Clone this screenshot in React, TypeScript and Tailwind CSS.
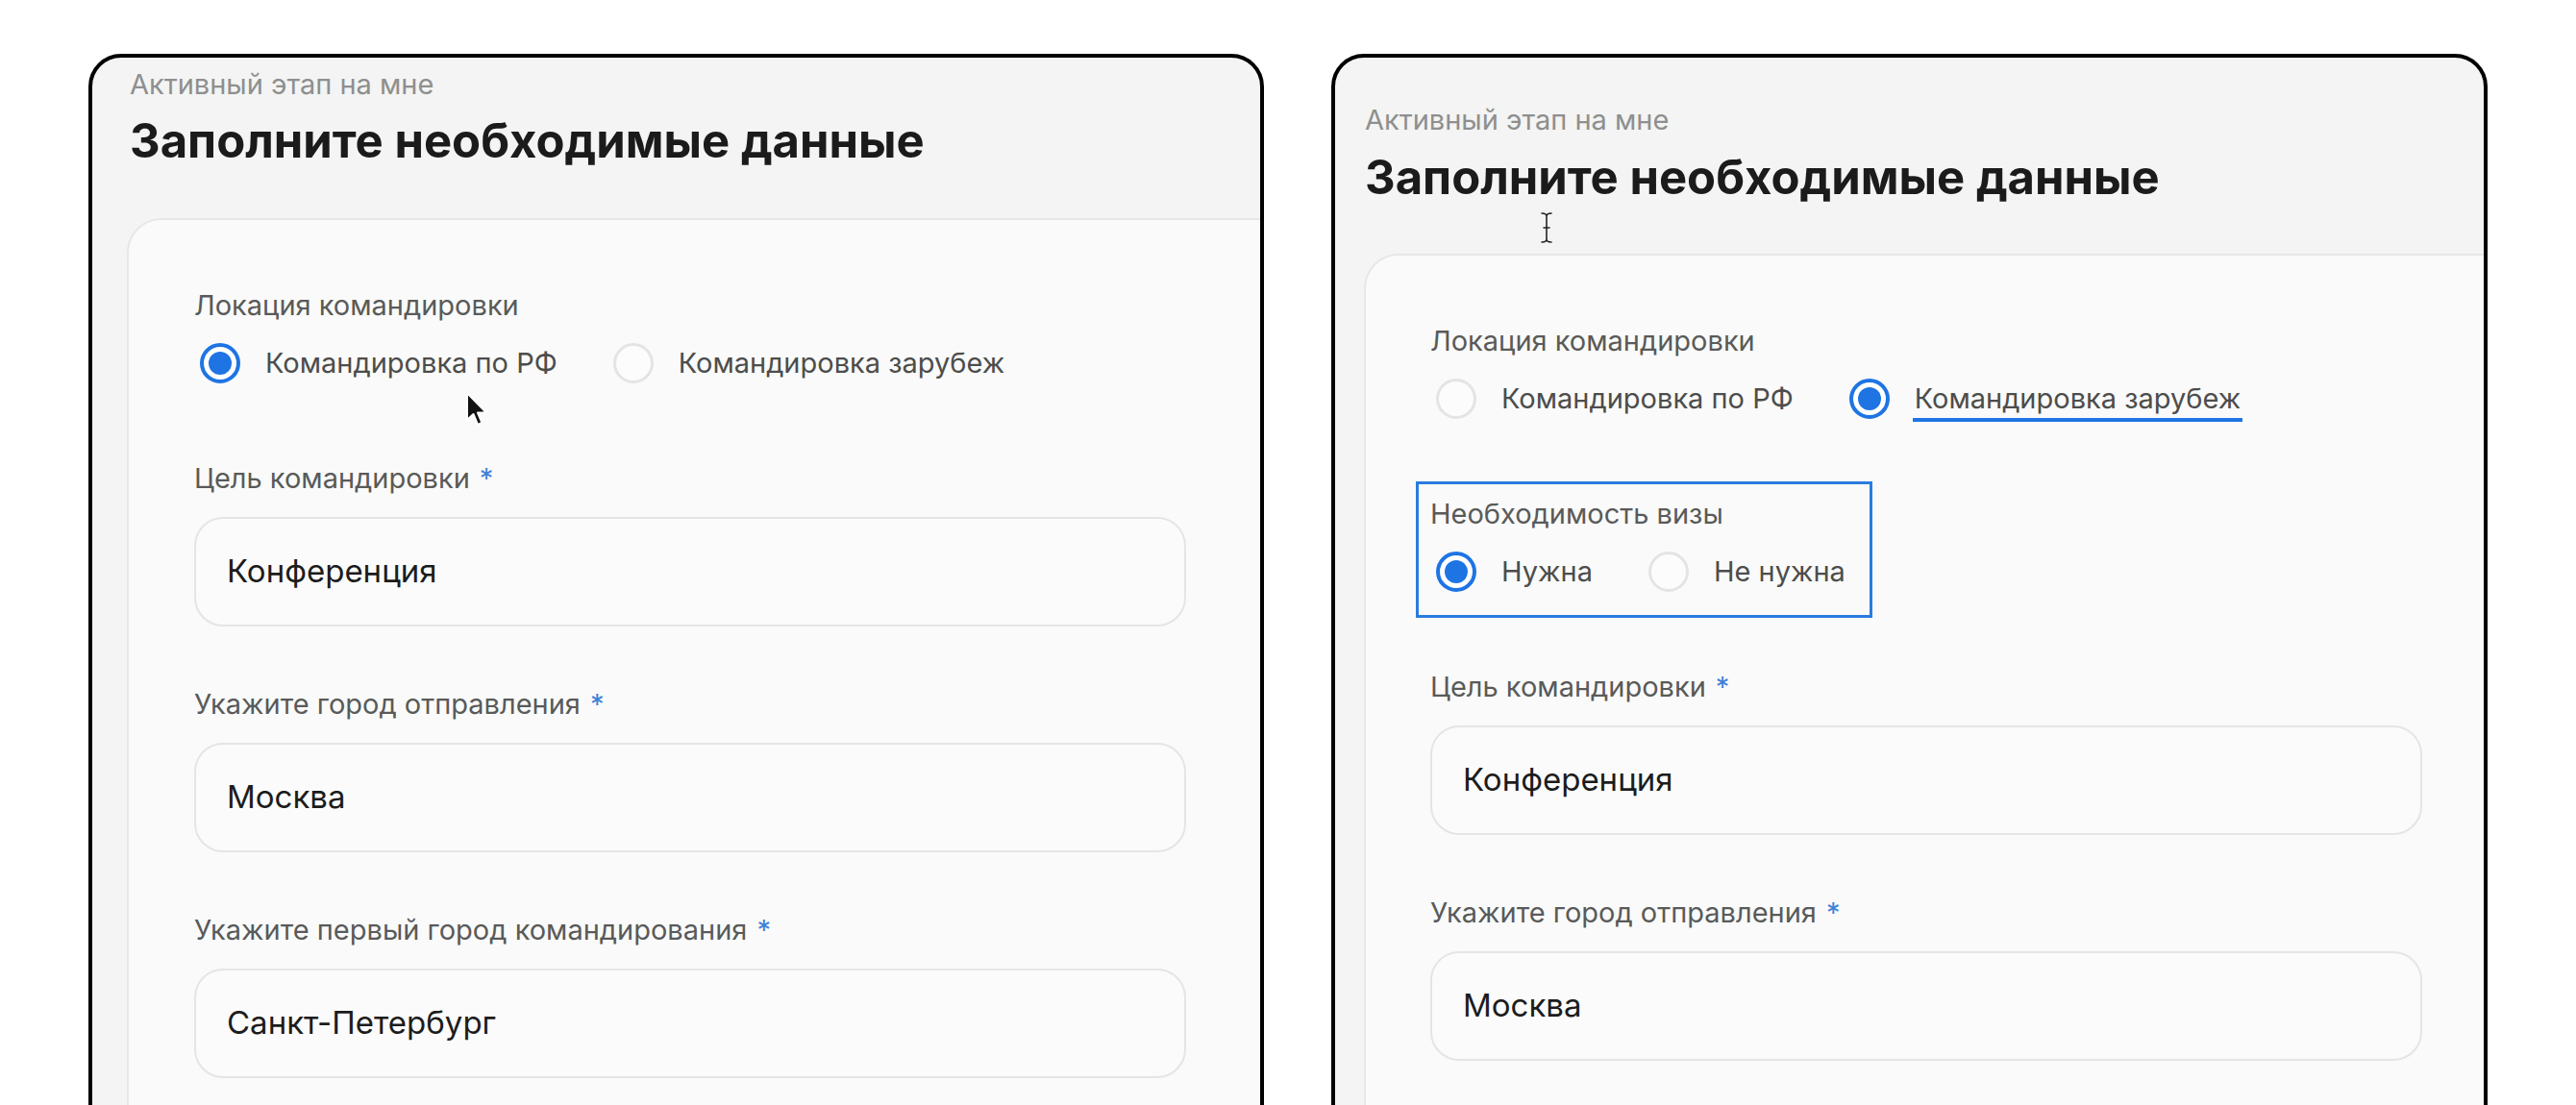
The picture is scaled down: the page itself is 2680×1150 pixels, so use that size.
import React from 'react';

type Option = { label: string; checked: boolean; underline?: boolean };

const Radio: React.FC<{ checked: boolean }> = ({ checked }) =>
  checked ? (
    <span className="flex h-[42px] w-[42px] shrink-0 items-center justify-center rounded-full border-4 border-[#1f74e4] bg-white">
      <span className="h-[24px] w-[24px] rounded-full bg-[#1f74e4]" />
    </span>
  ) : (
    <span className="h-[42px] w-[42px] shrink-0 rounded-full border-[3px] border-[#e3e4e3] bg-[#fcfcfc]" />
  );

const Label: React.FC<{ text: string; required?: boolean }> = ({ text, required }) => (
  <div className="h-[36px] text-[29px] leading-[36px] text-[#595a59]">
    {text}
    {required && <span className="ml-[10px] text-[#3f82d8]">*</span>}
  </div>
);

const RadioField: React.FC<{ label: string; options: Option[]; highlight?: boolean }> = ({
  label,
  options,
  highlight,
}) => (
  <div className="relative mb-[81px]">
    {highlight && (
      <div className="absolute -left-[15px] -top-[16px] h-[142px] w-[475px] border-[3px] border-[#2a7ce0]" />
    )}
    <Label text={label} />
    <div className="ml-[6px] mt-[21px] flex h-[42px] items-center gap-[58px]">
      {options.map((o) => (
        <div key={o.label} className="flex items-center gap-[26px]">
          <Radio checked={o.checked} />
          <span className="relative text-[29px] leading-[36px] text-[#4c4d4c]">
            {o.label}
            {o.underline && (
              <span className="absolute -bottom-[6px] -left-[2px] -right-[2px] h-[4px] bg-[#1f74e4]" />
            )}
          </span>
        </div>
      ))}
    </div>
  </div>
);

const TextField: React.FC<{ label: string; value: string }> = ({ label, value }) => (
  <div className="mb-[63px]">
    <Label text={label} required />
    <div className="mt-[22px] flex h-[114px] w-[1032px] items-center rounded-[30px] border-2 border-[#e4e5e4] bg-[#fafbfa] pl-[32px] text-[33px] text-[#1c1c1c]">
      {value}
    </div>
  </div>
);

const Title: React.FC = () => (
  <div className="h-[36px] text-[29px] leading-[36px] text-[#8e8f8e]">Активный этап на мне</div>
);

const Heading: React.FC = () => (
  <h1 className="h-[56px] text-[49px] font-bold leading-[56px] text-[#1b1b1b]">
    Заполните необходимые данные
  </h1>
);

const Arrow: React.FC = () => (
  <svg className="absolute left-[388px] top-[347px]" width="26" height="38" viewBox="0 0 26 38">
    <path
      d="M2 2 L2 30 L8.5 24 L13 35 L17.5 33 L13 22.5 L22 22.5 Z"
      fill="#111"
      stroke="#fff"
      strokeWidth="2"
      strokeLinejoin="round"
    />
  </svg>
);

const IBeam: React.FC = () => (
  <svg className="absolute left-[213px] top-[160px]" width="14" height="34" viewBox="0 0 14 34">
    <path
      d="M2 2 Q7 2 7 5 Q7 2 12 2 M7 5 L7 29 M2 32 Q7 32 7 29 Q7 32 12 32 M4 17 L10 17"
      fill="none"
      stroke="#222"
      strokeWidth="1.6"
      strokeLinecap="round"
    />
  </svg>
);

const App: React.FC = () => {
  return (
    <div className="flex h-[1150px] w-[2680px] items-start overflow-hidden bg-white font-['Inter',sans-serif]">
      {/* left frame: Командировка по РФ */}
      <div className="relative ml-[92px] mt-[56px] h-[1200px] w-[1223px] shrink-0 overflow-hidden rounded-[34px] border-4 border-black bg-[#f3f4f3] pl-[39px] pt-[10px]">
        <Title />
        <div className="mt-[13px]">
          <Heading />
        </div>
        <div className="-ml-[3px] mt-[52px] w-[1400px] rounded-[36px] border-2 border-[#e6e7e6] bg-[#f9faf9] pb-[200px] pl-[68px] pt-[71px]">
          <RadioField
            label="Локация командировки"
            options={[
              { label: 'Командировка по РФ', checked: true },
              { label: 'Командировка зарубеж', checked: false },
            ]}
          />
          <TextField label="Цель командировки" value="Конференция" />
          <TextField label="Укажите город отправления" value="Москва" />
          <TextField label="Укажите первый город командирования" value="Санкт-Петербург" />
        </div>
        <Arrow />
      </div>

      {/* right frame: Командировка зарубеж */}
      <div className="relative ml-[70px] mt-[56px] h-[1200px] w-[1203px] shrink-0 overflow-hidden rounded-[34px] border-4 border-black bg-[#f3f4f3] pl-[31px] pt-[47px]">
        <Title />
        <div className="mt-[14px]">
          <Heading />
        </div>
        <div className="-ml-[1px] mt-[51px] w-[1400px] rounded-[36px] border-2 border-[#e6e7e6] bg-[#f9faf9] pb-[200px] pl-[67px] pt-[71px]">
          <RadioField
            label="Локация командировки"
            options={[
              { label: 'Командировка по РФ', checked: false },
              { label: 'Командировка зарубеж', checked: true, underline: true },
            ]}
          />
          <RadioField
            label="Необходимость визы"
            highlight
            options={[
              { label: 'Нужна', checked: true },
              { label: 'Не нужна', checked: false },
            ]}
          />
          <TextField label="Цель командировки" value="Конференция" />
          <TextField label="Укажите город отправления" value="Москва" />
        </div>
        <IBeam />
      </div>
    </div>
  );
};

export default App;
